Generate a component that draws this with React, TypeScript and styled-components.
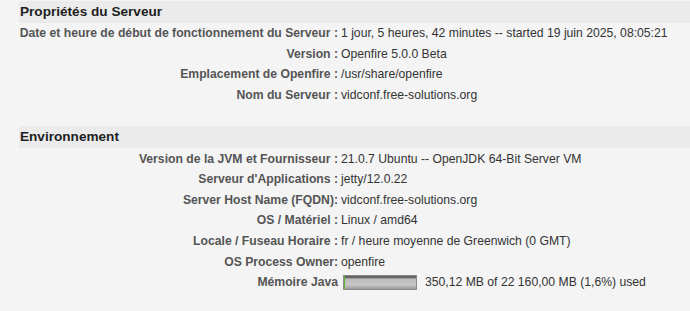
import React from "react";
import styled, { createGlobalStyle } from "styled-components";

const GlobalStyle = createGlobalStyle`
  html, body {
    margin: 0;
    padding: 0;
    background: #f4f4f4;
    font-family: "Liberation Sans", Arial, sans-serif;
  }
`;

type Row = { label: string; value?: string; memory?: boolean };

const serverRows: Row[] = [
  { label: "Date et heure de début de fonctionnement du Serveur :", value: "1 jour, 5 heures, 42 minutes -- started 19 juin 2025, 08:05:21" },
  { label: "Version :", value: "Openfire 5.0.0 Beta" },
  { label: "Emplacement de Openfire :", value: "/usr/share/openfire" },
  { label: "Nom du Serveur :", value: "vidconf.free-solutions.org" },
];

const envRows: Row[] = [
  { label: "Version de la JVM et Fournisseur :", value: "21.0.7 Ubuntu -- OpenJDK 64-Bit Server VM" },
  { label: "Serveur d'Applications :", value: "jetty/12.0.22" },
  { label: "Server Host Name (FQDN):", value: "vidconf.free-solutions.org" },
  { label: "OS / Matériel :", value: "Linux / amd64" },
  { label: "Locale / Fuseau Horaire :", value: "fr / heure moyenne de Greenwich (0 GMT)" },
  { label: "OS Process Owner:", value: "openfire" },
  { label: "Mémoire Java", memory: true },
];

const usedPercent = 1.6;

function Section({ title, rows }: { title: string; rows: Row[] }) {
  return (
    <Block>
      <Header>{title}</Header>
      <Table>
        <tbody>
          {rows.map((r, i) => (
            <tr key={i}>
              <Label>{r.label}</Label>
              <Value>
                {r.memory ? (
                  <Memory>
                    <Bar>
                      <Fill style={{ width: `${usedPercent}%` }} />
                    </Bar>
                    <span>350,12 MB of 22 160,00 MB (1,6%) used</span>
                  </Memory>
                ) : (
                  r.value
                )}
              </Value>
            </tr>
          ))}
        </tbody>
      </Table>
    </Block>
  );
}

export default function App() {
  return (
    <>
      <GlobalStyle />
      <Page>
        <Section title="Propriétés du Serveur" rows={serverRows} />
        <Section title="Environnement" rows={envRows} />
      </Page>
    </>
  );
}

const Page = styled.div`
  padding: 1px 0 0 19px;
  display: flex;
  flex-direction: column;
  gap: 21px;
`;

const Block = styled.div``;

const Header = styled.div`
  background: #ebebeb;
  height: 22px;
  line-height: 22px;
  padding-left: 1px;
  font-size: 13.6px;
  font-weight: bold;
  color: #1e1e1e;
`;

const Table = styled.table`
  border-collapse: collapse;
  font-size: 12.2px;
  td {
    padding: 0;
    height: 20.6px;
    vertical-align: middle;
  }
`;

const Label = styled.td`
  text-align: right;
  font-weight: bold;
  color: #555;
  padding-right: 3px !important;
  width: 319px;
  white-space: nowrap;
`;

const Value = styled.td`
  color: #333;
  white-space: nowrap;
`;

const Memory = styled.div`
  display: flex;
  align-items: center;
  gap: 8px;
  padding-left: 2px;
`;

const Bar = styled.div`
  width: 72px;
  height: 13px;
  border: 1px solid #8a8a8a;
  background: linear-gradient(#555 0, #777 2px, #bdbdbd 3px, #c6c6c6 70%, #9a9a9a 100%);
  display: flex;
`;

const Fill = styled.div`
  background: #5cb82e;
  height: 100%;
`;
